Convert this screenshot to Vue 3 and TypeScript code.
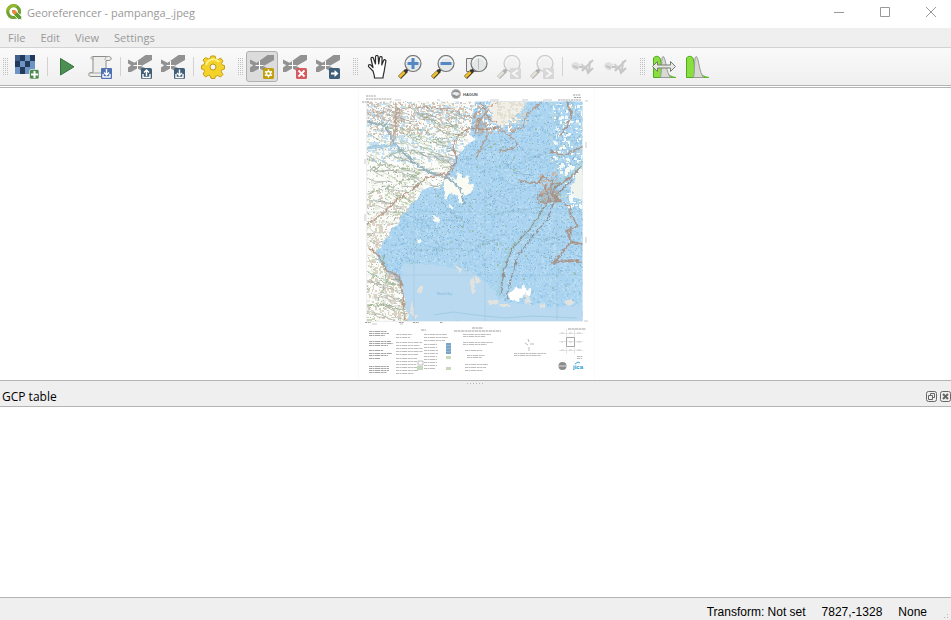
<script setup lang="ts">
interface Tool {
  icon: string
  label: string
  checked?: boolean
  disabled?: boolean
  separated?: boolean
}

const toolbars: Tool[][] = [
  [
    { icon: 'raster', label: 'Open raster' },
    { icon: 'play', label: 'Start georeferencing', separated: true },
    { icon: 'script', label: 'Generate GDAL script' },
    { icon: 'load', label: 'Load GCP points', separated: true },
    { icon: 'save', label: 'Save GCP points' },
    { icon: 'gear', label: 'Transformation settings', separated: true },
  ],
  [
    { icon: 'add', label: 'Add point', checked: true },
    { icon: 'delete', label: 'Delete point' },
    { icon: 'move', label: 'Move GCP point' },
  ],
  [
    { icon: 'hand', label: 'Pan' },
    { icon: 'zoomin', label: 'Zoom in' },
    { icon: 'zoomout', label: 'Zoom out' },
    { icon: 'zoomlayer', label: 'Zoom to layer' },
    { icon: 'zoomlast', label: 'Zoom last', disabled: true },
    { icon: 'zoomnext', label: 'Zoom next', disabled: true },
    { icon: 'link', label: 'Link Georeferencer to QGIS', separated: true, disabled: true },
    { icon: 'link', label: 'Link QGIS to Georeferencer', disabled: true },
  ],
  [
    { icon: 'fullstretch', label: 'Full histogram stretch' },
    { icon: 'localstretch', label: 'Local histogram stretch' },
  ],
]
const menus: string[] = ['File', 'Edit', 'View', 'Settings']
const gcpIcons: string[] = ['load', 'save', 'add', 'delete', 'move']
const zoomIcons: string[] = ['zoomin', 'zoomout', 'zoomlayer', 'zoomlast', 'zoomnext']

// Repeatable pseudo-random source for the map texture
let seed = 20731
function rnd(): number {
  seed = (seed * 16807) % 2147483647
  return seed / 2147483647
}
function specks(count: number, x: number, y: number, w: number, h: number, size = 1): string {
  let d = ''
  for (let i = 0; i < count; i++) {
    const px = Math.floor(x + rnd() * w)
    const py = Math.floor(y + rnd() * h)
    const len = 1 + Math.floor(rnd() * size)
    const tall = 1 + Math.floor(rnd() * size)
    d += `M${px} ${py}h${len}v${tall}h-${len}z`
  }
  return d
}
function streams(count: number, x: number, y: number, w: number, h: number, slope: number): string {
  let d = ''
  for (let i = 0; i < count; i++) {
    let px = x + rnd() * w
    let py = y + rnd() * h
    d += `M${px.toFixed(1)} ${py.toFixed(1)}`
    const steps = 2 + Math.floor(rnd() * 4)
    for (let s = 0; s < steps; s++) {
      px += 3 + rnd() * 4
      py += (rnd() - 0.5) * 6 + slope * 4
      d += `L${px.toFixed(1)} ${py.toFixed(1)}`
    }
  }
  return d
}

const landLayers = [
  { fill: '#e9ede2', d: specks(1100, 367, 101, 100, 220, 3) },
  { fill: '#cfdcc2', d: specks(400, 367, 101, 100, 220, 2) },
  { fill: '#c4e0f1', d: specks(500, 367, 101, 110, 60, 3) },
  { fill: '#b4bab5', d: specks(650, 367, 101, 100, 220, 1) },
  { fill: '#d6c3b6', d: specks(380, 367, 101, 105, 34, 2) },
  { fill: '#dcd3c6', d: specks(380, 367, 190, 45, 131, 3) },
  { fill: '#cad8ba', d: specks(200, 367, 190, 45, 131, 2) },
]
const waterLayers = [
  { fill: '#bbddf4', d: specks(3800, 378, 101, 205, 220, 2) },
  { fill: '#98c7e8', d: specks(2800, 378, 101, 205, 220, 2) },
  { fill: '#86afca', d: specks(800, 378, 101, 205, 170, 1) },
  { fill: '#9cc0ae', d: specks(120, 410, 120, 173, 170, 2) },
]
const eastLayers = [
  { fill: '#f3f8f9', d: specks(130, 552, 102, 31, 70, 3) },
  { fill: '#f8faf7', d: specks(60, 565, 165, 18, 42, 4) },
  { fill: '#f8faf7', d: specks(90, 470, 102, 50, 28, 3) },
  { fill: '#c8b6a8', d: specks(80, 538, 172, 20, 32, 2) },
  { fill: '#cbb4a5', d: specks(120, 474, 103, 40, 30, 2) },
  { fill: '#cadbc4', d: specks(60, 550, 102, 33, 100, 2) },
]
const hillSpecks = specks(160, 497, 101, 30, 24, 2)
const landRoads = streams(70, 362, 104, 92, 98, 0.35)
const landGreen = streams(30, 365, 125, 82, 90, 0.4)
const landSouth = streams(40, 362, 205, 40, 115, 0.35)
const waterRivers = streams(60, 385, 112, 190, 150, 0.1)

interface Note { x: number; y: number; w: number; rows: number; gap: number }
const notes: Note[] = [
  { x: 369, y: 331, w: 20, rows: 3, gap: 2 },
  { x: 369, y: 341, w: 24, rows: 3, gap: 2 },
  { x: 369, y: 350, w: 17, rows: 1, gap: 2 },
  { x: 369, y: 353, w: 24, rows: 2, gap: 2 },
  { x: 369, y: 358, w: 14, rows: 1, gap: 2 },
  { x: 369, y: 366, w: 22, rows: 4, gap: 2 },
  { x: 396, y: 334, w: 17, rows: 2, gap: 3 },
  { x: 396, y: 342, w: 27, rows: 5, gap: 3 },
  { x: 396, y: 358, w: 22, rows: 6, gap: 3 },
  { x: 424, y: 334, w: 26, rows: 3, gap: 3 },
  { x: 424, y: 344, w: 14, rows: 9, gap: 3 },
  { x: 463, y: 334, w: 28, rows: 2, gap: 2 },
  { x: 463, y: 342, w: 30, rows: 2, gap: 2 },
  { x: 465, y: 350, w: 21, rows: 1, gap: 2 },
  { x: 467, y: 355, w: 19, rows: 2, gap: 2 },
  { x: 465, y: 364, w: 23, rows: 3, gap: 3 },
  { x: 514, y: 353, w: 34, rows: 2, gap: 2 },
  { x: 577, y: 356, w: 6, rows: 2, gap: 2 },
]
function noteLines(n: Note): string {
  let d = ''
  for (let r = 0; r < n.rows; r++) {
    const w = Math.round(n.w * (r === n.rows - 1 ? 0.8 : 0.9 + rnd() * 0.1))
    d += `M${n.x} ${n.y + r * n.gap + 0.5}h${w}`
  }
  return d
}
const noteShapes = notes.map(noteLines)
</script>

<template>
  <div class="window">
    <header class="titlebar">
      <svg class="app-logo" viewBox="0 0 16 16" aria-hidden="true">
        <circle cx="7.6" cy="7.6" r="5.9" fill="none" stroke="#6fa22e" stroke-width="3.2" />
        <path d="M1.7 7a6 6 0 0 1 9-4.6" fill="none" stroke="#93b82d" stroke-width="2.6" />
        <path d="M7 7h3.2l5.4 5.6v2.9h-3.2L7 10z" fill="#5f9b30" stroke="#fff" stroke-width=".8" />
        <path d="M6 6h3l2.3 2.4-2.5 2.4L6 8.6z" fill="#ee8740" />
      </svg>
      <h1>Georeferencer - pampanga_.jpeg</h1>
      <div class="window-buttons">
        <button type="button" aria-label="Minimize"><svg viewBox="0 0 12 12"><path d="M1 6.500h10" /></svg></button>
        <button type="button" aria-label="Maximize"><svg viewBox="0 0 12 12"><path d="M1.500 1.500h9v9h-9z" /></svg></button>
        <button type="button" aria-label="Close"><svg viewBox="0 0 12 12"><path d="M1 1l10 10M11 1L1 11" /></svg></button>
      </div>
    </header>

    <nav class="menubar">
      <button v-for="m in menus" :key="m" type="button">{{ m }}</button>
    </nav>

    <div class="toolbars">
      <div v-for="(bar, b) in toolbars" :key="b" class="toolbar" role="toolbar">
        <span class="handle"></span>
        <template v-for="tool in bar" :key="tool.label">
          <span v-if="tool.separated" class="separator"></span>
          <button type="button" class="tool" :class="{ checked: tool.checked }" :aria-label="tool.label" :disabled="tool.disabled">
            <svg viewBox="0 0 24 24" :class="{ faded: tool.disabled }">
              <g v-if="tool.icon === 'raster'">
                <path d="M0 0h20v19H0z" fill="#6d95c4" />
                <path d="M5 0h5v6H5zM15 0h5v6h-5zM0 6h5v6H0zM0 0h5v6H0zM10 6h5v6h-5zM5 12h5v7H5z" fill="#243a5b" />
                <path d="M0 0h5v6H0z" fill="#3f5f8c" />
                <rect x="14.500" y="14.500" width="9.500" height="9.500" rx="1.500" fill="#4c8a50" stroke="#fff" stroke-width=".6" />
                <path d="M19.500 16v7M16 19.500h7" stroke="#fff" stroke-width="2" />
              </g>
              <path v-else-if="tool.icon === 'play'" d="M5.500 3.500v16.500L19 11.800z" fill="#4d8f52" stroke="#32733a" />
              <g v-else-if="tool.icon === 'script'">
                <path d="M5 1.500h15.500c3.500 0 3.500 4 .5 4h-3v16H3c-3 0-3-4 0-4h2z" fill="#eeeeec" stroke="#8c8c89" />
                <path d="M5 1.500c-3 0-2.500 3 0 3M17 5c0-2 1-3.500 3-3.500M1.500 18h15" fill="none" stroke="#a6a6a3" />
                <rect x="13" y="13" width="11" height="11" rx="1" fill="#4e72b1" />
                <path d="M18.500 14v6M16 17.500l2.500 2.500 2.500-2.500M15 19v3h7v-3" fill="none" stroke="#fff" stroke-width="1.400" />
              </g>
              <g v-else-if="gcpIcons.includes(tool.icon)">
                <path d="M24 0v5L3 17H0v-4.500L17.500 0z" fill="#929292" />
                <path d="M0 4.500l21 10.500-4 2.500L0 8.500z" fill="#929292" />
                <path d="M9.500 6v9M5.500 10.500h8" stroke="#fff" stroke-width="1" />
                <rect x="13" y="13" width="11" height="11" rx="1.500" :fill="tool.icon === 'add' ? '#c19f0f' : tool.icon === 'delete' ? '#d65a60' : '#405f78'" />
                <g fill="none" stroke="#fff" stroke-width="1.400">
                  <path v-if="tool.icon === 'load'" d="M18.500 21v-6M16 17.500l2.500-2.500 2.500 2.500M15 19v3.500h7V19" />
                  <path v-else-if="tool.icon === 'save'" d="M18.500 14.500v6M16 18l2.500 2.500L21 18M15 19v3.500h7V19" />
                  <g v-else-if="tool.icon === 'add'">
                    <path d="M18.500 14.500v8M15 16.500l7 4M22 16.500l-7 4" stroke-width="1.500" />
                    <circle cx="18.500" cy="18.500" r="2" fill="#c19f0f" />
                  </g>
                  <path v-else-if="tool.icon === 'delete'" d="M15.500 15.500l6 6M21.500 15.500l-6 6" stroke-width="1.800" />
                  <path v-else d="M15 17.500h3.500V15l4 3.500-4 3.500v-2.500H15z" fill="#fff" stroke="none" />
                </g>
              </g>
              <g v-else-if="tool.icon === 'gear'">
                <path d="M10 1h4l.8 3 2 .8L19.500 3l2.500 3-1.500 2.500.8 1.500 2.200.5v3.500l-2.500.7-.8 2L22 19.500 19.500 22l-3-1.500-2 .8-.7 2.200h-3.600l-.8-2.500-2-.8L4.500 22 2 19l1.500-2.500-.8-2L.5 14v-3.500l2.500-.8.8-2L2 5l2.500-2.500L7.200 4l2-.8z" fill="#f3d329" stroke="#c69d13" />
                <path d="M5 10a7.500 7.500 0 0 1 13-3" fill="none" stroke="#fff083" stroke-width="2" />
                <circle cx="12" cy="12" r="3" fill="#f5f5f3" stroke="#bd9613" />
              </g>
              <path v-else-if="tool.icon === 'hand'" transform="translate(1 0)" d="M7 16L2.800 11.800c-1.200-1.800 1-3 2.300-1.500L7 12.500 5 4c-.2-2 2-2 2.500-.5L9.500 9V2c0-2 2.700-2 2.700 0l.5 7 1-6.500c.5-1.700 2.600-1 2.400.5L15.800 10l1.800-4.500c.8-1.500 2.600-.5 2.200 1l-1.500 9c-.3 3-1.300 4-1.300 7.500H8.500c0-3-1-5-1.500-7z" fill="#fff" stroke="#2c2c2c" stroke-width="1.200" stroke-linejoin="round" />
              <g v-else-if="zoomIcons.includes(tool.icon)">
                <path v-if="tool.icon === 'zoomlayer'" d="M2.500 3.500h12v13h-12z" fill="#eee" stroke="#777" />
                <path d="M8.500 15.500L1.500 22.500" stroke="#443b22" stroke-width="4" />
                <path d="M6.500 17L1.500 22" stroke="#f3c22e" stroke-width="2.500" />
                <path d="M10.500 13.500l-3 3" stroke="#333" stroke-width="2.500" />
                <circle cx="15" cy="8.500" r="8" fill="#e5e8e9" stroke="#777" stroke-width="1.200" />
                <path d="M9 7a6.300 6.300 0 0 1 12 0" fill="none" stroke="#fff" />
                <path v-if="tool.icon === 'zoomin'" d="M15 3v11M9.500 8.500h11" stroke="#5488c5" stroke-width="3" />
                <path v-else-if="tool.icon === 'zoomout'" d="M9.500 8.500h11" stroke="#5488c5" stroke-width="3" />
                <path v-else-if="tool.icon === 'zoomlayer'" d="M14.500 3.500v11" stroke="#bbb" />
                <g v-else>
                  <rect x="13" y="13" width="11" height="11" rx="1" fill="#a1a8b1" />
                  <path :d="tool.icon === 'zoomlast' ? 'M21 15l-5 3.500 5 3.500' : 'M16 15l5 3.500-5 3.500'" fill="none" stroke="#fff" stroke-width="2" />
                </g>
              </g>
              <g v-else-if="tool.icon === 'link'">
                <path d="M1 10c3-5 7-3 9 0l-2 5c-3 1-6-1-7-5z" fill="#b4bab6" />
                <path d="M3 11l5 2M9 12h7" stroke="#66706a" stroke-width="2" />
                <path d="M11 9l4 3-3 3" fill="none" stroke="#8194aa" stroke-width="2" />
                <path d="M12 16L23 5M16 12l2 6 5-5M20 6l-1 10" fill="none" stroke="#76766e" stroke-width="2" />
              </g>
              <g v-else>
                <path d="M1.500 22.500V3c2-2.500 5-2 6.500 0 1.500 5 2 14 2 19.500z" fill="#88df3d" stroke="#4fab20" />
                <path d="M13 19c3-1 5 3 11 3.500H13z" fill="#7ddc30" stroke="#5db42d" />
                <path d="M8.500 22.500C10 15 9 2 11 1.500c2.500 0 3 13 6 18.500l1.500 2.500z" fill="#d8dad4" stroke="#999" />
                <path v-if="tool.icon === 'fullstretch'" d="M.5 11.500L5.500 6.500v3.500h13V6.500l5 5-5 5V13h-13v3.500z" fill="#e8e8e4" stroke="#777c72" />
              </g>
            </svg>
          </button>
        </template>
      </div>
    </div>

    <main class="canvas">
      <svg class="map" viewBox="355 88 241 292" role="img" aria-label="Scanned topographic map">
        <defs>
          <clipPath id="frame"><path d="M367 101.500H582.500V321H367z" /></clipPath>
          <clipPath id="bay">
            <path d="M475 101h108v220H408l1-7-4-6 1-8-4-7 1-8-7-4-2-6-6-2-4-8-5-3-3-12 5-2 2-7 6-5 2-7 8-5 2-9 6-3 3-7 8-6 4-9 9-3 8 2 4-7 4-9 4-4 4-11 8-7 5-7 8-5-6-4z" />
          </clipPath>
          <filter id="jagged" x="-5%" y="-5%" width="110%" height="110%">
            <feTurbulence type="fractalNoise" baseFrequency=".25" numOctaves="2" seed="4" />
            <feDisplacementMap in="SourceGraphic" scale="5" xChannelSelector="R" yChannelSelector="G" />
          </filter>
        </defs>
        <path d="M358.500 89V379M594.500 89V379" stroke="#fafafa" />
        <g clip-path="url(#frame)">
          <path d="M367 101h216v220H367z" fill="#fbfcf9" />
          <path v-for="(l, i) in landLayers" :key="'l' + i" :d="l.d" :fill="l.fill" />
          <g fill="none" stroke-width=".8">
            <path :d="landRoads" stroke="#8f9a94" opacity=".7" />
            <path :d="landGreen" stroke="#9bb884" opacity=".6" />
            <path :d="landSouth" stroke="#a3a198" opacity=".65" />
          </g>
          <g clip-path="url(#bay)">
            <path d="M367 101h216v220H367z" fill="#abd4f0" />
            <path v-for="(l, i) in waterLayers" :key="'w' + i" :d="l.d" :fill="l.fill" />
            <path :d="waterRivers" fill="none" stroke="#78a7c5" stroke-width=".5" opacity=".55" />
            <path d="M403 264h25l18 3 25 5 18 12 10 15 20 5h20v4l44-2v16H400z" fill="#b8d9f0" filter="url(#jagged)" />
            <path v-for="(l, i) in eastLayers" :key="'e' + i" :d="l.d" :fill="l.fill" />
            <g filter="url(#jagged)">
              <path d="M497 99h30l-5 11-10 8-9 9-12-5 1-9-6-8z" fill="#f2efe8" />
              <path d="M585 162v41l-10-7-5-9 6-9-5-6 8-7z" fill="#f1f4ee" />
            </g>
            <path :d="hillSpecks" fill="#ddd8c8" opacity=".7" />
          </g>
          <g filter="url(#jagged)">
            <path d="M444 182l5-6 7 4 2-8 5 6 5-3 1 8 5 2-3 8-8 3-1 8-4-3v-6l-7-2-5 7-2-9z" fill="#fafbf2" />
            <path d="M432 215l4 2 3-1 1 5-5 1zM449 205h4v5h-3zM418 239l4 2-3 3z" fill="#f7faf5" />
            <path d="M509 294l7-7 3 2 5-4 2 6 5-1-1 6-7-1-5 6-8-1z" fill="#fff" />
            <path d="M418 286l4 1v6l-4 1zM455 264l6 4v7l-4-4zM470 280l4-3 1 16-3 1zM475 276l5 2-1 5-4-1zM488 301l9-1 1 4-8 1zM500 304h10v3h-9zM525 292l5 7 1 5-5-1zM540 303l6 2-1 3-5-1zM563 302l8-3 3 4-4 3zM412 300l2 13 3 4-3 2-4-10z" fill="#e2e2df" />
          </g>
          <g class="map-lines" fill="none" stroke-linejoin="round" filter="url(#jagged)">
            <path d="M367 122l18 3 10 19 21 21 18 9 14 4 12 10 4 16" stroke="#87aabe" stroke-width="2" />
            <path d="M367 148l17-2 12 0" stroke="#9cc6de" stroke-width="3" />
            <path d="M396 101l-1 38M396 126l-6 20M396 119l-13-6M367 113l30-3 27-3 30 3 18 8 9-8 9-4 8-4" stroke="#b89a88" stroke-width="1.200" />
            <path d="M452 172l5-14-4-12 5-10 12-8 16 2 12-3M444 180l8-15M445 174l-17 3-15 12-18 12-14 14-14 9" stroke="#ad8c79" stroke-width="1.500" />
            <path d="M480 101l9 18 9 4M488 133l-12 26M475 133l4-13 9-9M497 128l14 8 7 9-20 8M510 132l14-6 3-12 13-10 2-9" stroke="#b0937f" stroke-width="1.300" />
            <path d="M367 158l28 13 28 14M367 171l18-7 25 6M377 123l17 7 30 0 16 9 12-2M420 114l20 11 18 1M367 193l25-6 31-15M403 133l23 9 20 1M384 158l19-8 30 5" stroke="#94a789" stroke-width=".9" />
            <path d="M583 163l-12 12-15 9-7 12-9 22-16 17-13 13-8 20-4 29" stroke="#a3d1e2" stroke-width="4" />
            <path d="M583 165l-13 12-14 10-7 12-12 20-12 15-12 13-8 20-5 28M573 179l-16 15-9 24-18 22-12 15-6 20-6 25" stroke="#8d8078" stroke-width="1.100" />
            <path d="M519 180l7 2 12 1 5-7 9 6-2 10 10 8-20 3-3-7 10-3-2-9M552 185l10-2 12-9M564 204l6 3 1 10 7 9-11 5 4 11 13 2M571 226l-1 16-9 13-9 8 20-3 10 2M566 101l6 12-5 14-7 9M550 151l14 4 19-8" stroke="#a98c7b" stroke-width="1.800" />
            <path d="M490 215l30-5 30-4M483 238l22 8M420 228l22 20 27 3 30-13M435 190l12 19 18 14M500 160l15 12 20 4M490 143l-25 17M413 250h32M520 232l23 8 20-4" stroke="#749ea8" stroke-width=".5" />
            <path d="M370 249l9 7 8 15 12 5 4 20 2 24" stroke="#af8f7e" stroke-width="1.800" />
            <path d="M367 272l16 7 20 1M367 289l14-8 22 5M367 306l18-2 20 7M383 255l3 27-9 20" stroke="#8ca581" stroke-width=".9" />
            <path d="M386 270l9 2 7 6 1 9-7-5-8-4zM391 114l8-7 5 12-9 5zM472 122l10-3 7 9-9 8zM542 190l12-4 7 9-11 8-10-3z" fill="#a88975" opacity=".35" />
          </g>
          <path d="M434 315l19-3 22 3 30 3 27-2 45 2" fill="none" stroke="#8cbcd9" stroke-width=".5" />
          <path d="M414 101v220M485 101v220M557 101v220M367 150h216M367 212h216M367 275h216" stroke="#78a5bd" stroke-width=".5" opacity=".4" />
        </g>
        <path d="M366.500 101V321.500H583" fill="none" stroke="#dfe6e8" stroke-width=".6" />
        <text x="437" y="295" font-size="3" fill="#7fb5da">Manila Bay</text>
        <circle cx="456" cy="94" r="4.800" fill="#8a8d8e" />
        <path d="M452 94c2-3 5-3 8 0l-3 2z" fill="#e7e9e8" />
        <circle cx="456" cy="94" r="4.300" fill="none" stroke="#ccc" stroke-width=".6" />
        <text x="463" y="96" class="sheet-name">HAGUN</text>
        <g fill="none" stroke="#888" stroke-width=".8">
          <path d="M366 96h10M366 99h26M362 102h7M365 322.500h6M399 322.500h5M413 322.500h6M440 322.500h3M558 100h23M573 95h8M574 97.500h7" stroke-dasharray="2 .6" />
          <path d="M395 100h6M437 100h3M490 100h9M522 100h6M543 100h9M585 101h3M584 321h4M372 324h5M400 324h3M365 159v5M365 214v7M586 142v6M586 237v6" stroke="#bbb" />
          <path v-for="(d, i) in noteShapes" :key="'n' + i" :d="d" stroke-dasharray="3 .5 2 .5 5 .7" :opacity="i < 6 ? 0.95 : 0.7" />
          <path d="M421 330h5M472 328h11M454 331h47M568 329h18" stroke-dasharray="3 .5" />
          <path d="M525 343l3 2M528 339l1 3M530 344h4M529 347v4" stroke="#aaa" />
        </g>
        <path d="M446 343h5v11h-5z" fill="#92b8d6" />
        <path d="M446 344h5M446 347h5M446 350h5M446 353h5" stroke="#5c89ac" stroke-width=".8" />
        <path d="M446 356h5v3h-5zM446 367h5v3h-5zM417 366h6v4h-6z" fill="#c7d9bd" />
        <path d="M418 361h5v4h-5z" fill="none" stroke="#999" stroke-width=".6" />
        <path d="M559 333.500h24M559 341.500h24M559 350.500h24M566.500 329v25M574.500 329v25" stroke="#e0e0e0" stroke-width=".8" />
        <path d="M566.500 337.500h8v9h-8z" fill="none" stroke="#aaa" />
        <g stroke="#bbb" stroke-width=".7"><path d="M561 333h3M569 333h3M577 333h4M561 342h2M569 342h3M577 342h4M561 350h3M569 350h3M577 350h4" /></g>
        <circle cx="562.500" cy="366" r="4" fill="#8b8b8b" />
        <path d="M559 366h7" stroke="#ddd" />
        <text x="573" y="369" class="agency">jica</text>
        <path d="M575 364l3-2 2 1" fill="none" stroke="#38a3dd" />
      </svg>
    </main>

    <div class="splitter"><span></span></div>

    <section class="gcp">
      <header class="dock-title">
        <h2>GCP table</h2>
        <button type="button" aria-label="Float panel">
          <svg viewBox="0 0 11 11"><rect x=".5" y=".5" width="10" height="10" rx="2" /><path d="M4.500 4.500v-2h4v4h-2M2.500 4.500h4v4h-4z" /></svg>
        </button>
        <button type="button" aria-label="Close panel">
          <svg viewBox="0 0 11 11"><rect x=".5" y=".5" width="10" height="10" rx="2" /><path d="M3 3l5 5M8 3L3 8" stroke-width="2" /></svg>
        </button>
      </header>
      <div class="dock-body"></div>
    </section>

    <footer class="statusbar">
      <span>Transform: Not set</span>
      <span>7827,-1328</span>
      <span>None</span>
      <svg class="grip" viewBox="0 0 6 6" aria-hidden="true"><path d="M4 0h1v1H4zM4 3h1v1H4zM1 3h1v1H1z" /></svg>
    </footer>
  </div>
</template>

<style>
body {
  background: #fff;
}
</style>

<style scoped>
.window {
  display: flex;
  flex-direction: column;
  min-height: 100vh;
  overflow: hidden;
  font-family: "Open Sans", "Noto Sans", sans-serif;
  font-size: 12px;
}
button {
  margin: 0;
  padding: 0;
  border: 0;
  background: none;
  font: inherit;
  color: inherit;
}
h1,
h2 {
  margin: 0;
  font-weight: 400;
}
svg {
  display: block;
}
.titlebar {
  display: flex;
  align-items: center;
  height: 28px;
  padding-left: 6px;
  color: #999;
}
.titlebar h1 {
  flex: 1;
  padding-bottom: 2px;
  font-size: 11px;
  line-height: 24px;
}
.app-logo {
  width: 16px;
  height: 16px;
  margin: 0 5px 4px 0;
}
.window-buttons {
  display: flex;
  gap: 5px;
  padding-bottom: 4px;
}
.window-buttons button {
  display: flex;
  align-items: center;
  justify-content: center;
  width: 41px;
  height: 24px;
}
.window-buttons svg {
  width: 12px;
  height: 12px;
  fill: none;
  stroke: #999;
}
.menubar {
  display: flex;
  gap: 15px;
  height: 19px;
  padding-left: 8px;
  border-bottom: 1px solid #d3d3d3;
  background: #efefef;
  color: #999;
  font-size: 11px;
  line-height: 20px;
}
.toolbars {
  display: flex;
  height: 37px;
  margin-bottom: 1px;
  border-bottom: 1px solid #b4b4b4;
  background: linear-gradient(#fafafa, #efefef);
}
.toolbar {
  display: flex;
  align-items: center;
  gap: 1px;
  padding: 0 6px 0 3px;
}
.handle {
  width: 5px;
  height: 17px;
  margin-right: 2px;
  background:
    linear-gradient(90deg, transparent 1px, #f5f5f5 1px) 0 0 / 2px 2px,
    linear-gradient(#c0c0c0 1px, transparent 1px) 0 0 / 2px 2px;
}
.separator {
  display: flex;
  justify-content: center;
  width: 6px;
}
.separator::after {
  content: "";
  width: 1px;
  height: 19px;
  background: #d2d2d2;
}
.tool {
  display: flex;
  align-items: center;
  justify-content: center;
  box-sizing: border-box;
  width: 32px;
  height: 31px;
  border: 1px solid transparent;
  border-radius: 3px;
}
.tool.checked {
  border-color: #b0b0b0;
  background: #dcdcdc;
}
.tool svg {
  flex: none;
  width: 24px;
  height: 24px;
}
.tool .faded {
  opacity: 0.35;
  filter: grayscale(0.8);
}
.canvas {
  display: flex;
  justify-content: center;
  border-top: 1px solid #b4b4b4;
  border-bottom: 1px solid #b4b4b4;
}
.map {
  width: 241px;
  height: 292px;
}
.map-lines {
  opacity: 0.85;
}
.sheet-name {
  font: 700 4px "Liberation Sans", sans-serif;
  fill: #555;
}
.agency {
  font: 700 6px "Liberation Sans", sans-serif;
  fill: #2497d6;
}
.splitter {
  display: flex;
  justify-content: center;
  height: 6px;
  background: #efefef;
}
.splitter span {
  width: 17px;
  height: 1px;
  margin-top: 2px;
  background: repeating-linear-gradient(90deg, #b8b8b8 0 1px, transparent 1px 3px);
}
.gcp {
  display: flex;
  flex: 1;
  flex-direction: column;
}
.dock-title {
  display: flex;
  align-items: center;
  gap: 3px;
  height: 19px;
  padding-left: 2px;
  border-bottom: 1px solid #b4b4b4;
  background: #efefef;
}
.dock-title h2 {
  flex: 1;
  font-size: 12px;
  line-height: 19px;
}
.dock-title svg {
  width: 11px;
  height: 11px;
  fill: none;
  stroke: #666;
}
.dock-body {
  flex: 1;
}
.statusbar {
  display: flex;
  align-items: center;
  justify-content: flex-end;
  gap: 16px;
  height: 22px;
  padding-right: 2px;
  border-top: 1px solid #b4b4b4;
  background: #efefef;
  font-family: "Liberation Sans", Arial, sans-serif;
  line-height: 22px;
}
.statusbar span {
  padding-top: 6px;
}
.grip {
  align-self: flex-end;
  width: 6px;
  height: 6px;
  fill: #b5b5b5;
}
</style>
